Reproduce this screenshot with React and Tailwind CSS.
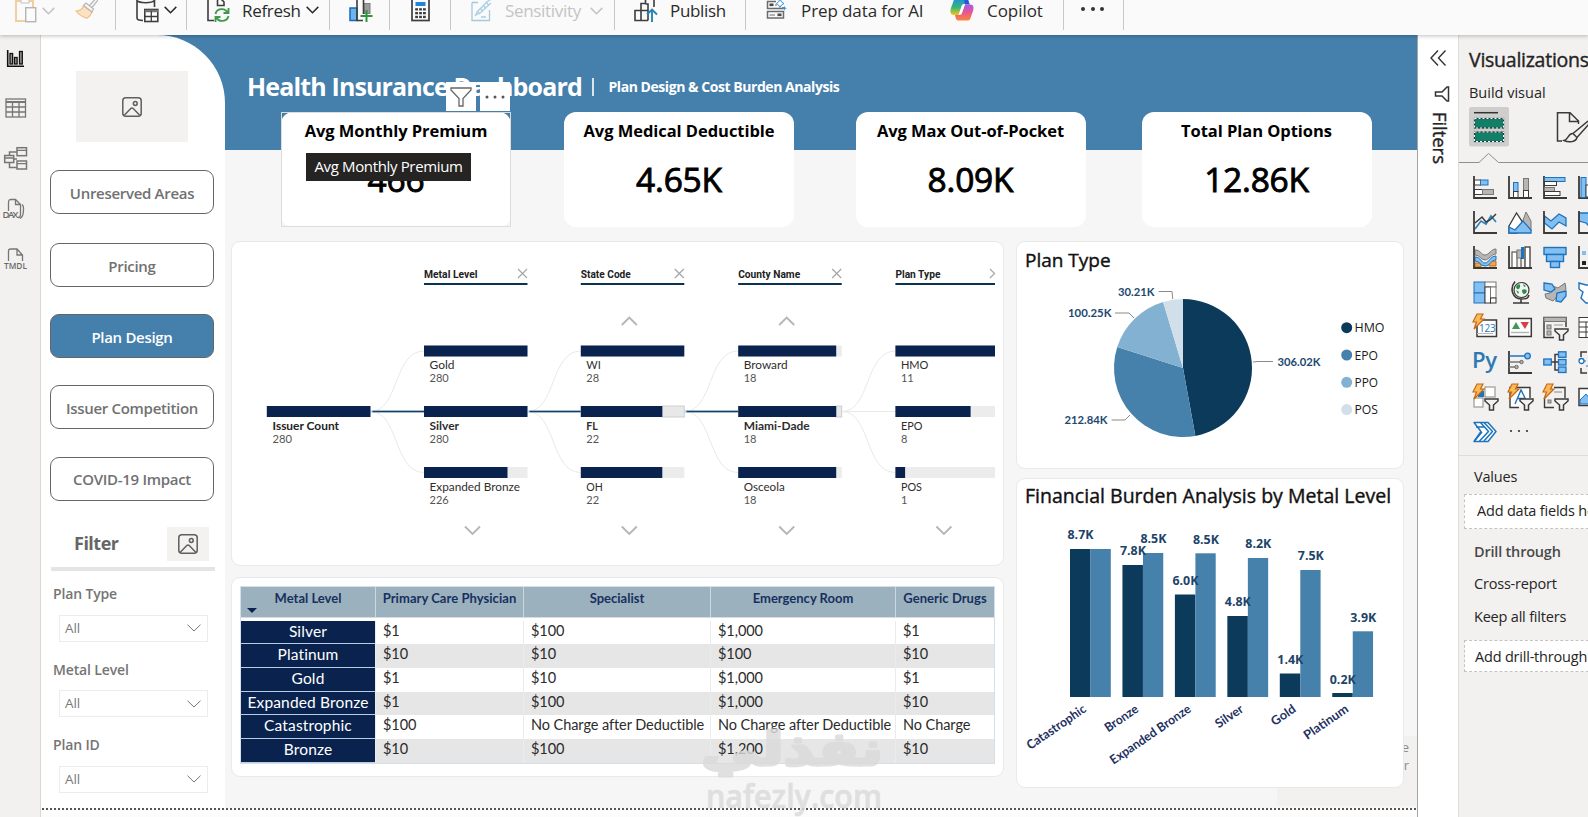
import React from 'react';

const NAVY = '#0a234e';
const DARK = '#3b3a39';
const BLUE = '#1e73bd';
const SKY = '#83bff0';
const GREY = '#b8b6b4';

const Chevron = ({ color = '#2b2b2b', className = '' }) => (
  <svg width="13" height="8" viewBox="0 0 13 8" fill="none" stroke={color} strokeWidth="1.5" className={className}>
    <path d="M0.7 0.9L6.5 6.7L12.3 0.9" />
  </svg>
);

const PasteIcon = () => (
  <svg width="22" height="23" viewBox="0 0 22 23" fill="none">
    <path d="M10 21H1V1H18V7" stroke="#f2cfa0" strokeWidth="2" />
    <rect x="6" y="-2" width="8" height="5" stroke="#c4c4c4" fill="#fafafa" />
    <rect x="10.700" y="7.700" width="10" height="14" stroke="#b5b5b5" strokeWidth="1.400" fill="#fbfbfb" />
  </svg>
);

const BrushIcon = () => (
  <svg width="23" height="19" viewBox="0 0 23 19" fill="none">
    <path d="M1 11C4 11 7 10 8.500 6L17 12C16 15 14 17 12 18.300C8 17 4 15 1 11Z" fill="#fbe3c2" stroke="#f0c08a" strokeWidth="1.200" />
    <path d="M8.500 5.500L17 12M11 3L18.500 9L17 12L8.500 5.500ZM14.500 5.500L20.500 -1M17 7.500L23 0" stroke="#b9b9b9" strokeWidth="1.300" />
  </svg>
);

const DataIcon = () => (
  <svg width="23" height="23" viewBox="0 0 23 23" fill="none" stroke="#3d3d3d" strokeWidth="1.600">
    <path d="M1 0V18C1 19.600 4 20.500 7 20.500M18.500 0V7M1 0.500C3 3.400 16 3.400 18.500 0.500" />
    <rect x="8.800" y="9.500" width="13" height="12" fill="#fff" />
    <path d="M8.800 11H22" strokeWidth="2.500" stroke="#777" />
    <path d="M8.800 16.500H22M15.300 11V21.500" strokeWidth="1.300" />
  </svg>
);

const RefreshIcon = () => (
  <svg width="23" height="23" viewBox="0 0 23 23" fill="none">
    <path d="M7 20.500H1V-1M10.500 -1V5.500H17V2L14 -1" stroke="#3d3d3d" strokeWidth="1.600" />
    <path d="M8.500 14C9.500 8 18 7.500 20.500 12.500M21.500 8V13H16.500M21.500 16C20 22 12 22.500 9.500 17.500M8.500 22V17H13.500" stroke="#3f9a4c" strokeWidth="1.900" />
  </svg>
);

const NewVisualIcon = () => (
  <svg width="24" height="23" viewBox="0 0 24 23" fill="none">
    <rect x="1" y="8" width="7" height="12.500" fill="#6eb4ef" stroke="#1769b5" strokeWidth="1.500" />
    <rect x="15" y="3.500" width="6" height="10" fill="#9c9c9c" stroke="#7d7d7d" />
    <path d="M8 -1V20.500H14M14.500 -1V14" stroke="#3d3d3d" strokeWidth="1.600" />
    <path d="M17.500 10V22M11.500 16H23.500" stroke="#2e9440" strokeWidth="2" />
  </svg>
);

const CalculatorIcon = () => (
  <svg width="19" height="22" viewBox="0 0 19 22" fill="none">
    <rect x="1" y="-2" width="17" height="22.500" stroke="#3d3d3d" strokeWidth="1.700" />
    <rect x="4.500" y="2" width="10" height="4" fill="#2182d8" />
    {[8.2, 12, 15.8].map(y => [4.2, 8.1, 12].map(x => (
      <rect key={x + '-' + y} x={x} y={y} width="2.800" height="2.300" fill="#3d3d3d" />
    )))}
  </svg>
);

const SensitivityIcon = () => (
  <svg width="23" height="22" viewBox="0 0 23 22" fill="none" stroke="#a9cfe6" strokeWidth="1.300">
    <path d="M1 2.500H7M1 2.500V20.500H18.500V10" stroke="#a8c8dc" />
    <path d="M4 15.500L7 11L17 1L22 -2M4 15.500L9 13L20 3" />
    <path d="M6 11L9 14M9 8L12 11.500M12 5L15 8.500M15 2L18 5.500M10 17H15" />
  </svg>
);

const PublishIcon = () => (
  <svg width="24" height="22" viewBox="0 0 24 22" fill="none">
    <path d="M14 20.500H1V10.500H7V3.500H11.500V-1M7 10.500H14V20.500M7 10.500V20.500M11.500 4H14V10M20 -1V7" stroke="#3d3d3d" strokeWidth="1.600" />
    <path d="M18 22V10M13 14.500L18 9.500L23 14.500" stroke="#2385b8" strokeWidth="1.900" />
  </svg>
);

const PrepIcon = () => (
  <svg width="21" height="20" viewBox="0 0 21 20" fill="none">
    <path d="M10 1.500H1.500V8.500H17V7M1.500 11.500H17.500V18H1.500Z" stroke="#6b6b6b" strokeWidth="1.500" />
    <rect x="3.500" y="3.500" width="4" height="2.600" fill="#4a4a4a" />
    <rect x="11.500" y="13.500" width="4" height="2.600" fill="#4a4a4a" />
    <path d="M3.500 15H9M9 5H11" stroke="#6b6b6b" />
    <path d="M14 -1L15.500 2L18 3.500L15.500 5L14 7.500L12.500 5L10.500 3.500L12.500 2Z" stroke="#3b94dc" fill="#fff" />
    <path d="M18.500 6L19.200 7.600L20.800 8.300L19.200 9L18.500 10.500L17.700 9L16.200 8.300L17.700 7.600Z" fill="#3b94dc" />
  </svg>
);

const CopilotIcon = () => (
  <svg width="24" height="22" viewBox="0 0 24 22">
    <defs>
      <linearGradient id="cpA" x1="0" y1="0" x2="0" y2="1">
        <stop offset="0" stopColor="#1b8ce8" />
        <stop offset="0.550" stopColor="#35b778" />
        <stop offset="1" stopColor="#f5c518" />
      </linearGradient>
      <linearGradient id="cpB" x1="0" y1="0" x2="0" y2="1">
        <stop offset="0" stopColor="#a35be8" />
        <stop offset="0.500" stopColor="#e8578f" />
        <stop offset="1" stopColor="#f9863b" />
      </linearGradient>
    </defs>
    <path d="M7 -2H16C18 -2 18.500 2 19.500 4L14 4C12 4 11.500 6 11 8L8.500 15H4C0 15 0 11 1 8L3.500 1C4 -1 5 -2 7 -2Z" fill="url(#cpA)" />
    <path d="M14 -2H16.500C18.500 -2 18.500 3 20 4.500L15 4.500Z" fill="#2a53d8" />
    <path d="M17 20.500H8C6 20.500 5.500 17 5 15H9C11 15 12 13 12.500 11L15 4.500H20C24 4.500 24 8 23 11L20.500 18C20 20 19 20.500 17 20.500Z" fill="url(#cpB)" />
    <path d="M14.500 5.500L11.500 14.300L9 14.300L12 5.500Z" fill="#fff" />
  </svg>
);

const Toolbar = () => (
  <div className="relative z-10 flex h-[35px] shrink-0 bg-[#fafafa] text-[17px] tracking-[-0.32px] text-[#2b2b2b] shadow-[0_1px_4px_rgba(0,0,0,0.25)] [&>div]:flex [&>div]:h-[30px] [&>div]:shrink-0 [&>div]:border-r [&>div]:border-[#c8c8c8] [&_span]:mt-[-1px] [&_span]:h-[24px] [&_span]:leading-[24px] [&_span]:whitespace-nowrap">
    <div className="w-[116px] pl-[15px]">
      <PasteIcon />
      <Chevron color="#c3c3c3" className="mt-[7px] ml-[5px]" />
      <div className="ml-[20px]"><BrushIcon /></div>
    </div>
    <div className="w-[71px] pl-[20px]">
      <DataIcon />
      <Chevron className="mt-[6px] ml-[5px]" />
    </div>
    <div className="w-[143px] pl-[20px]">
      <RefreshIcon />
      <span className="ml-[12px] w-[64px]">Refresh</span>
      <Chevron className="mt-[6px]" />
    </div>
    <div className="w-[60px] pl-[19px]"><NewVisualIcon /></div>
    <div className="w-[61px] pl-[21px]"><CalculatorIcon /></div>
    <div className="w-[164px] pl-[20px]">
      <SensitivityIcon />
      <span className="ml-[11px] w-[85px] text-[#c4c4c4]">Sensitivity</span>
      <Chevron color="#c4c4c4" className="mt-[7px]" />
    </div>
    <div className="w-[131px] pl-[19px]">
      <PublishIcon />
      <span className="ml-[12px]">Publish</span>
    </div>
    <div className="w-[318px] pl-[20px]">
      <PrepIcon />
      <span className="ml-[14px] w-[149px] tracking-[-0.1px]">Prep data for AI</span>
      <CopilotIcon />
      <span className="ml-[13px] tracking-[-0.05px]">Copilot</span>
    </div>
    <div className="w-[60px] gap-[5.500px] pt-[7px] pl-[17px]">
      <i className="size-[4px] rounded-full bg-[#333]" />
      <i className="size-[4px] rounded-full bg-[#333]" />
      <i className="size-[4px] rounded-full bg-[#333]" />
    </div>
  </div>
);

const Rail = () => (
  <div className="w-[41px] shrink-0 border-r border-[#d9d8d7] bg-[#f2f1f0]">
    <svg width="40" height="250" viewBox="0 35 40 250" fill="none" stroke="#777675" strokeWidth="1.300">
      <path d="M7.700 50V66.300H24" stroke="#111" strokeWidth="1.600" />
      <g stroke="#111" fill="#999">
        <rect x="10" y="53.500" width="2.600" height="10.500" />
        <rect x="14.500" y="57.500" width="2.600" height="6.500" />
        <rect x="19.500" y="51.500" width="2.800" height="12.500" />
      </g>
      <rect x="6" y="99" width="19.500" height="18" />
      <path d="M6 102H25.500" strokeWidth="2" />
      <path d="M6 107H25.500M6 112H25.500M12.500 102V117M19 102V117" />
      <g fill="#f2f1f0" strokeWidth="1.500">
        <path d="M9.500 156V152H17M9.500 162V167.500H17M14 159H17" />
        <rect x="4.700" y="155.500" width="9" height="7" />
        <rect x="17" y="147.700" width="9.500" height="8" />
        <rect x="17" y="161" width="9.500" height="8" />
      </g>
      <path d="M4.700 158H13.700M17 150.300H26.500M17 163.600H26.500" />
      <path d="M8.500 211V203C8.500 200 9 199.500 11 199.500H15.500L20.500 204.500V214C20.500 216 20 217.500 18 217.500M15.500 199.500V204.500H20.500M22 204.500C24 206 23.500 207 23.500 210C23.500 214 22.500 217 20 218.500" />
      <path d="M8.500 261V251C8.500 249.500 9 249 10.500 249H17L22.500 255V261M17 249V255H22.500" />
      <g fill="#6b6a69" stroke="none" fontFamily="Open Sans" fontWeight="600">
        <text x="2.500" y="218" fontSize="9.500" textLength="16">DAX</text>
        <text x="4" y="269" fontSize="9.500" textLength="23" lengthAdjust="spacingAndGlyphs">TMDL</text>
      </g>
    </svg>
  </div>
);

const ImageIcon = () => (
  <svg width="20" height="20" viewBox="0 0 20 20" fill="none" stroke="#5f5e5d" strokeWidth="1.500">
    <rect x="0.800" y="0.800" width="18.400" height="18.400" rx="3" />
    <circle cx="13.300" cy="6.500" r="1.900" />
    <path d="M2.500 18L9 11.300Q10 10.500 11 11.300L17.500 18" />
  </svg>
);

const pages = [
  { name: 'Unreserved Areas', cls: 'mt-[28px]' },
  { name: 'Pricing', cls: 'mt-[29px]' },
  { name: 'Plan Design', cls: 'mt-[27px]', active: true },
  { name: 'Issuer Competition', cls: 'mt-[27px]' },
  { name: 'COVID-19 Impact', cls: 'mt-[27.5px]' },
];

const Slicer = ({ label, className }) => (
  <div className={className}>
    <div className="pl-[12px] text-[14px] leading-[20px] font-semibold tracking-[-0.15px] text-[#757575]">{label}</div>
    <div className="mt-[10.5px] ml-[18px] flex h-[27px] w-[149px] items-center justify-between border border-[#ececec] pr-[6px] pl-[5px] text-[13.5px] tracking-[-0.1px] text-[#7a7a7a]">
      All
      <svg width="14" height="8" viewBox="0 0 14 8" fill="none" stroke="#777"><path d="M0.500 0.700L7 7L13.500 0.700" /></svg>
    </div>
  </div>
);

const Sidebar = () => (
  <div className="w-[184px] shrink-0 rounded-tr-[68px] bg-white pt-[36px]">
    <div className="ml-[35px] flex h-[71px] w-[112px] items-center justify-center bg-[#f3f2f1]">
      <ImageIcon />
    </div>
    {pages.map(p => (
      <div
        key={p.name}
        className={`ml-[9px] flex h-[44px] w-[164px] items-center justify-center rounded-[9px] border border-[#666] pt-[2px] text-[15px] font-semibold tracking-[-0.3px] whitespace-nowrap ${p.cls} ${p.active ? 'bg-[#4580ac] text-white' : 'text-[#717171]'}`}
      >
        {p.name}
      </div>
    ))}
    <div className="mt-[26px] flex h-[34px] items-center justify-between pr-[16px] pl-[33px]">
      <span className="text-[18px] font-bold tracking-[-0.5px] text-[#666]">Filter</span>
      <div className="flex h-[34px] w-[42px] items-center justify-center bg-[#f3f2f1]"><ImageIcon /></div>
    </div>
    <div className="mt-[6.5px] ml-[10px] h-[4px] w-[164px] bg-[#e4e4e4]" />
    <Slicer label="Plan Type" className="mt-[13px]" />
    <Slicer label="Metal Level" className="mt-[18px]" />
    <Slicer label="Plan ID" className="mt-[18px]" />
  </div>
);

const Kpi = ({ title, value, className = '', children }) => (
  <div className={`relative flex h-[115px] w-[230px] shrink-0 flex-col items-center rounded-[12px] bg-white whitespace-nowrap text-black ${className}`}>
    <div className="mt-[7px] text-[16.5px] leading-[24px] font-bold tracking-[-0.05px]">{title}</div>
    <div className="mt-[13px] text-[33.5px] leading-[46px] tracking-[-0.2px] [-webkit-text-stroke:0.9px_#000]">{value}</div>
    {children}
  </div>
);

const columns = [
  {
    x: 424.5, w: 103.5, title: 'Metal Level', tw: 53.5, up: false,
    nodes: [['Gold', 280, 103.5, 25], ['Silver', 280, 103.5, 29.5], ['Expanded Bronze', 226, 83.5, 90.500]],
  },
  {
    x: 581.3, w: 103.5, title: 'State Code', tw: 50, up: true,
    nodes: [['WI', 28, 103.5, 14.500], ['FL', 22, 81.5, 11.500], ['OH', 22, 81.5, 16.500]],
  },
  {
    x: 738.7, w: 103.5, title: 'County Name', tw: 62, up: true,
    nodes: [['Broward', 18, 98, 44], ['Miami-Dade', 18, 98, 66], ['Osceola', 18, 98, 41]],
  },
  {
    x: 895.9, w: 99.6, title: 'Plan Type', tw: 45, up: false,
    nodes: [['HMO', 11, 99.6, 27.500], ['EPO', 8, 75.2, 21.500], ['POS', 1, 9.7, 21]],
  },
];

const DecompositionTree = () => (
  <svg width="770" height="322" viewBox="232.500 242 770 322" className="block" fontFamily="Lato, Open Sans, sans-serif">
    <g fill="none" stroke="#e9e9e9">
      {[371, 528, 685, 842.5].map((x, i) => {
        const nx = columns[i].x;
        const m = (x + nx) / 2;
        return (
          <g key={x}>
            <path d={`M${x} 411.500C${m + 2} 411.500 ${m - 4} 351 ${nx} 351`} />
            <path d={`M${x} 411.500C${m + 2} 411.500 ${m - 4} 472.500 ${nx} 472.500`} />
            {i === 3 ? (
              <path d={`M${x} 411.500H${nx}`} />
            ) : (
              <>
                <path d={`M${x} 411.500H${nx}`} stroke="#c2dbec" strokeWidth="2.400" />
                <path d={`M${x + 2} 411.500H${nx}`} stroke="#173f63" strokeWidth="1.300" />
              </>
            )}
          </g>
        );
      })}
    </g>
    <rect x="267.300" y="406" width="103.700" height="11" fill={NAVY} />
    <text x="273" y="430" fontSize="12" fontWeight="700" fill="#252423" textLength="66.500" lengthAdjust="spacingAndGlyphs">Issuer Count</text>
    <text x="273" y="443" fontSize="12" fill="#555" textLength="19.500" lengthAdjust="spacingAndGlyphs">280</text>
    {columns.map((c, ci) => (
      <g key={c.title}>
        <text x={c.x} y="278" fontSize="11.500" fontWeight="700" fill="#222" textLength={c.tw} lengthAdjust="spacingAndGlyphs" fontFamily="Roboto">{c.title}</text>
        {ci === 3
          ? <path d="M990.500 269L995 273.500L990.500 278" fill="none" stroke="#aaa" strokeWidth="1.300" />
          : <path d={`M${c.x + 94} 269L${c.x + 103} 278M${c.x + 103} 269L${c.x + 94} 278`} stroke="#a6a6a6" strokeWidth="1.200" />}
        <rect x={c.x} y="283" width={c.w} height="2" fill="#0b3350" />
        {c.up && <path d={`M${c.x + 41} 325L${c.x + 48.5} 317.500L${c.x + 56} 325`} fill="none" stroke="#b5b5b5" strokeWidth="1.800" />}
        <path d={`M${c.x + 41} 526.500L${c.x + 48.5} 534L${c.x + 56} 526.500`} fill="none" stroke="#b5b5b5" strokeWidth="1.800" />
        {c.nodes.map(([name, value, w, tw], i) => {
          const y = [345.5, 406, 467][i];
          const ty = [369, 430, 491][i];
          return (
            <g key={name}>
              <rect x={c.x} y={y} width={c.w} height="11" fill="#ececec" />
              {i === 1 && w < c.w && ci < 3 && <rect x={c.x + w} y={y} width={c.w - w} height="11" fill="#e8e8e8" stroke="#cfcfcf" />}
              <rect x={c.x} y={y} width={w} height="11" fill={NAVY} />
              <text x={c.x + 5.5} y={ty} fontSize="12" fontWeight={i === 1 && ci < 3 ? 700 : 400} fill="#2f2e2d" textLength={tw} lengthAdjust="spacingAndGlyphs">{name}</text>
              <text x={c.x + 5.5} y={ty + 13} fontSize="12" fill="#555" textLength={String(value).length * 6.4} lengthAdjust="spacingAndGlyphs">{value}</text>
            </g>
          );
        })}
      </g>
    ))}
  </svg>
);

const rows = [
  ['Silver', '$1', '$100', '$1,000', '$1'],
  ['Platinum', '$10', '$10', '$100', '$10'],
  ['Gold', '$1', '$10', '$1,000', '$1'],
  ['Expanded Bronze', '$1', '$100', '$1,000', '$10'],
  ['Catastrophic', '$100', 'No Charge after Deductible', 'No Charge after Deductible', 'No Charge'],
  ['Bronze', '$10', '$100', '$1,200', '$10'],
];

const CostTable = () => (
  <div className="ml-[8px] w-[755px] border border-[#d5dfe8] font-[Lato,sans-serif] whitespace-nowrap">
    <div className="relative grid h-[31px] grid-cols-[134px_148px_187px_185px_99px] border-b border-[#d5dde3] bg-[#9cb1be] text-center text-[13px] leading-[23px] font-bold text-[#17305f] [&>div+div]:border-l [&>div+div]:border-[#ccd8e0]">
      <div>Metal Level</div>
      <div className="tracking-[0.05px]">Primary Care Physician</div>
      <div>Specialist</div>
      <div>Emergency Room</div>
      <div className="tracking-[0.05px]">Generic Drugs</div>
      <svg width="10" height="5" viewBox="0 0 10 5" className="absolute top-[21px] left-[6px]"><path d="M0 0H10L5 5Z" fill={NAVY} /></svg>
    </div>
    <div className="mt-[2.500px]">
      {rows.map((r, i) => (
        <div key={r[0]} className={`grid h-[23.7px] grid-cols-[134px_148px_187px_185px_99px] text-[14.5px] leading-[20px] tracking-[-0.07px] text-[#2b2b2b] [&>div+div]:border-l [&>div+div]:border-[#ebebeb] [&>div+div]:pl-[7px] ${i % 2 ? 'bg-[#e6e6e6]' : 'bg-white'}`}>
          <div className="border-b border-[#b9cde4] bg-[#0a234e] text-center text-[15.5px] leading-[21px] tracking-[0.15px] text-white">{r[0]}</div>
          <div>{r[1]}</div>
          <div>{r[2]}</div>
          <div>{r[3]}</div>
          <div>{r[4]}</div>
        </div>
      ))}
    </div>
  </div>
);

const slices = [
  { name: 'HMO', value: 306.02, color: '#0b3a5b' },
  { name: 'EPO', value: 212.84, color: '#4681ab' },
  { name: 'PPO', value: 100.25, color: '#83b1d2' },
  { name: 'POS', value: 30.21, color: '#d0dfea' },
];

const PieChart = () => {
  const total = slices.reduce((s, d) => s + d.value, 0);
  let acc = 0;
  const pt = v => {
    const a = (v / total) * Math.PI * 2;
    return `${1183 + 69 * Math.sin(a)} ${368 - 69 * Math.cos(a)}`;
  };
  return (
    <svg width="386" height="190" viewBox="1017 275 386 190" className="block" fontFamily="Open Sans, sans-serif">
      {slices.map(d => {
        const from = pt(acc);
        acc += d.value;
        return <path key={d.name} d={`M1183 368L${from}A69 69 0 0 1 ${pt(acc)}Z`} fill={d.color} />;
      })}
      <path d="M1253 362L1258 361.500H1273M1158.500 291.500H1172L1172.800 299M1115 313H1129L1134 318M1111.500 420H1125L1130 415" fill="none" stroke="#8a8a8a" />
      <g fontSize="12" fontWeight="700" fill="#1d4870" fontFamily="Lato">
        <text x="1277.500" y="366" textLength="43" lengthAdjust="spacingAndGlyphs">306.02K</text>
        <text x="1118" y="296" textLength="36.500" lengthAdjust="spacingAndGlyphs">30.21K</text>
        <text x="1068" y="317.200" textLength="43.500" lengthAdjust="spacingAndGlyphs">100.25K</text>
        <text x="1064.500" y="424" textLength="43" lengthAdjust="spacingAndGlyphs">212.84K</text>
      </g>
      {slices.map((d, i) => (
        <g key={d.name}>
          <circle cx="1346.700" cy={327.7 + i * 27.3} r="5.500" fill={d.color} />
          <text x="1354.500" y={332.2 + i * 27.3} fontSize="12.500" fill="#1a1a1a" textLength={i === 0 ? 30 : 23.5} lengthAdjust="spacingAndGlyphs">{d.name}</text>
        </g>
      ))}
    </svg>
  );
};

// [label, dark bar top, light bar top, dark label, light label, dark label y, light label y, axis text length]
const bars = [
  ['Catastrophic', 549, 549, '8.7K', '', 539, 0, 69],
  ['Bronze', 565, 553, '7.8K', '8.5K', 555.3, 543.3, 38],
  ['Expanded Bronze', 594.5, 553.3, '6.0K', '8.5K', 585.3, 544.3, 95],
  ['Silver', 616, 558, '4.8K', '8.2K', 606.3, 548.3, 31],
  ['Gold', 673.5, 570, '1.4K', '7.5K', 664.3, 560.3, 27],
  ['Platinum', 693, 631.3, '0.2K', '3.9K', 683.5, 621.5, 51],
];

const BarChart = () => (
  <svg width="386" height="265" viewBox="1017 515 386 265" className="block" fontFamily="Lato, sans-serif">
    {bars.map(([name, t1, t2], i) => {
      const x = 1070 + i * 52.45;
      return (
        <g key={name}>
          <rect x={x} y={t1} width="20.500" height={697 - t1} fill="#0b3a5b" />
          <rect x={x + 20.5} y={t2} width="20.300" height={697 - t2} fill="#4681ab" />
        </g>
      );
    })}
    {bars.map(([name, , , l1, l2, y1, y2, len], i) => {
      const x = 1070 + i * 52.45;
      return (
        <g key={name} fontWeight="700" fill="#1c4468">
          <text x={x - 2.5} y={y1} fontSize="12.500" fontFamily="Open Sans" textLength="26" lengthAdjust="spacingAndGlyphs">{l1}</text>
          {l2 && <text x={x + 18} y={y2} fontSize="12.500" fontFamily="Open Sans" textLength="26" lengthAdjust="spacingAndGlyphs">{l2}</text>}
          <text fontSize="12.500" fill="#23305f" textAnchor="end" textLength={len} lengthAdjust="spacingAndGlyphs" transform={`translate(${x + 17} 711) rotate(-34.500)`}>{name}</text>
        </g>
      );
    })}
  </svg>
);

const Card = ({ className, children }) => (
  <div className={`rounded-[9px] border border-[#e9e9e9] bg-white ${className}`}>{children}</div>
);

const Report = () => (
  <div className="relative flex h-[782px] w-[1376px] shrink-0 flex-col bg-[#fcfcfc]">
    <div className="flex h-[773px] bg-[linear-gradient(#4580ac_0_115px,#f6f6f6_115px)]">
      <Sidebar />
      <div className="relative w-[1192px]">
        <div className="flex h-[77px] items-center pt-[26px] pl-[22px] whitespace-nowrap text-white">
          <div className="w-[342px] text-[25px] font-bold tracking-[-0.85px]">Health Insurance Dashboard</div>
          <div className="ml-[3px] h-[18px] w-[1.5px] bg-white/80" />
          <div className="mt-[-1px] ml-[15px] text-[14px] font-bold tracking-[-0.45px]">Plan Design & Cost Burden Analysis</div>
        </div>
        <div className="flex pl-[56px]">
          <Kpi title="Avg Monthly Premium" value="466">
            <div className="absolute inset-0 border border-[#dcdcdc]" />
            <div className="absolute top-[41px] left-[25px] flex h-[28px] w-[165px] items-center justify-center bg-[#252423] pb-[1px] text-[15px] tracking-[-0.35px] text-white">Avg Monthly Premium</div>
            <div className="absolute top-[-30px] left-[165px] flex gap-[4px] [&>div]:flex [&>div]:h-[29px] [&>div]:w-[30px] [&>div]:items-center [&>div]:justify-center [&>div]:bg-white">
              <div>
                <svg width="22" height="20" viewBox="0 0 22 20" fill="none" stroke="#666" strokeWidth="1.300"><path d="M1 1H21V3L13 11.500V19H9V11.500L1 3Z" /></svg>
              </div>
              <div>
                <svg width="20" height="4" viewBox="0 0 20 4" fill="#555"><circle cx="2" cy="2" r="1.500" /><circle cx="10" cy="2" r="1.500" /><circle cx="18" cy="2" r="1.500" /></svg>
              </div>
            </div>
          </Kpi>
          <Kpi title="Avg Medical Deductible" value="4.65K" className="ml-[53px]" />
          <Kpi title="Avg Max Out-of-Pocket" value="8.09K" className="ml-[61.5px]" />
          <Kpi title="Total Plan Options" value="12.86K" className="ml-[56px]" />
        </div>
        <div className="mt-[14px] flex gap-[12px] pl-[6px]">
          <div className="flex w-[773px] flex-col gap-[11px]">
            <Card className="h-[325px]"><DecompositionTree /></Card>
            <Card className="h-[200px] pt-[8px]"><CostTable /></Card>
          </div>
          <div className="z-10 flex w-[388px] flex-col gap-[9px]">
            <Card className="h-[228px]">
              <div className="h-[33px] pt-[3px] pl-[8px] text-[19px] leading-[30px] text-[#111] [-webkit-text-stroke:0.4px_#111]">Plan Type</div>
              <PieChart />
            </Card>
            <Card className="h-[310px]">
              <div className="h-[36px] pt-[2px] pl-[8px] text-[19.5px] leading-[30px] tracking-[0.02px] whitespace-nowrap text-[#111] [-webkit-text-stroke:0.4px_#111]">Financial Burden Analysis by Metal Level</div>
              <BarChart />
            </Card>
          </div>
        </div>
        <div className="absolute right-0 bottom-[2px] h-[70px] w-[140px] bg-[#f2f1f0] pt-[2px] pr-[8px] text-right text-[13px] leading-[18px] text-[#8a8a8a]">
          Activate<br />for
        </div>
      </div>
    </div>
    <div className="ml-[1px] h-[2px] bg-[repeating-linear-gradient(90deg,#555_0_2px,transparent_2px_4px)]" />
    <svg width="200" height="106" viewBox="692 711 200 106" className="absolute top-[676px] left-[651px]" fill="#dadada" stroke="#dadada" opacity="0.820" strokeLinejoin="round" fontFamily="DejaVu Sans" fontWeight="700">
      <text x="701" y="765" fontSize="46" textLength="182" strokeWidth="3" lengthAdjust="spacingAndGlyphs">نفذلي</text>
      <text x="706" y="808" fontSize="32" textLength="176" strokeWidth="0.600" fontWeight="600" lengthAdjust="spacingAndGlyphs" fontFamily="Open Sans">nafezly.com</text>
    </svg>
  </div>
);

const FiltersPane = () => (
  <div className="flex w-[42px] shrink-0 flex-col items-center border-r border-l border-r-[#dddcdb] border-l-[#a5a5a5] bg-white pt-[15px]">
    <svg width="17" height="16" viewBox="0 0 17 16" fill="none" stroke="#333" strokeWidth="1.400"><path d="M8 0.500L1 8L8 15.500M15.500 0.500L8.500 8L15.500 15.500" /></svg>
    <svg width="16" height="16" viewBox="0 0 16 16" fill="none" stroke="#333" strokeWidth="1.500" className="mt-[20px] ml-[7px]"><path d="M14.500 1V15H13L8 10H1.500V6H8L13 1Z" /></svg>
    <div className="mt-[10px] ml-[4px] text-[18.5px] leading-[22px] tracking-[-0.05px] text-[#252423] [-webkit-text-stroke:0.4px_#252423] [writing-mode:vertical-rl]">Filters</div>
  </div>
);

const Axes = () => <path d="M1 0V22H24" fill="none" stroke={DARK} strokeWidth="1.800" />;
const Bolt = () => <path d="M5 0H11L8.500 5H12L2 15L4.500 8H1Z" fill="#fbb95a" stroke="#c56a12" strokeWidth="1.200" />;
const Funnel = () => <path d="M12 13H25V15L20.500 19V24H16.500V19L12 15Z" fill="#f2f1f0" stroke={DARK} strokeWidth="1.500" />;

const vizIcons = [
  <g key="0"><Axes /><rect x="1.500" y="4" width="6" height="5" fill="#fff" stroke={DARK} /><rect x="7.500" y="4" width="7.500" height="5" fill={SKY} stroke={BLUE} /><rect x="1.500" y="13.500" width="8" height="5" fill="#fff" stroke={DARK} /><rect x="9.500" y="13.500" width="11" height="5" fill={GREY} stroke="#777" /></g>,
  <g key="1"><Axes /><rect x="5.500" y="6.500" width="4.500" height="9" fill={SKY} stroke={BLUE} /><rect x="5.500" y="15.500" width="4.500" height="6" fill="#fff" stroke={DARK} /><rect x="15.500" y="2.500" width="5" height="12" fill={GREY} stroke="#777" /><rect x="15.500" y="14.500" width="5" height="7" fill="#fff" stroke={DARK} /></g>,
  <g key="2"><Axes /><rect x="1.500" y="1.500" width="20.500" height="4" fill={SKY} stroke={BLUE} /><rect x="1.500" y="5.500" width="12" height="4" fill="#fff" stroke={DARK} /><rect x="1.500" y="11.500" width="10" height="4" fill={GREY} stroke="#777" /><rect x="1.500" y="15.500" width="15.500" height="4" fill="#fff" stroke={DARK} /></g>,
  <g key="3"><Axes /><rect x="3" y="1.500" width="5" height="20" fill={SKY} stroke={BLUE} /><rect x="8" y="9" width="5" height="12" fill="#fff" stroke={DARK} /></g>,
  <g key="4" fill="none"><path d="M2 18L8 10L13 13L18 5L23 11" stroke="#2c83b8" strokeWidth="1.700" /><path d="M2 12L9 6L13 11L17 9L23 3" stroke={DARK} strokeWidth="1.500" /><Axes /></g>,
  <g key="5"><path d="M18 1L23 10V20L14 12Z" fill={GREY} stroke="#777" /><path d="M1 15L8.500 2L17 15L9 22H1Z" fill="#fff" stroke={DARK} strokeWidth="1.300" /><path d="M1 16L7 19L15 10L23 19V22H1Z" fill={SKY} stroke={BLUE} strokeWidth="1.300" /></g>,
  <g key="6"><path d="M1.500 5L8 10L16 3L23 7V15L16 11L9 18L1.500 12Z" fill={SKY} stroke={BLUE} strokeWidth="1.300" /><Axes /></g>,
  <g key="7"><path d="M1 2H24V12L15 19L8 12L1 10Z" fill={SKY} stroke={BLUE} strokeWidth="1.300" /><Axes /></g>,
  <g key="8"><path d="M2 4C8 4 8 9 12 9S18 3 23 3V8C18 8 16 14 12 14S7 9 2 9Z" fill={GREY} stroke="#777" /><path d="M2 17H8V21H2ZM16 15H23V20H16Z" fill="#f6a24a" stroke="#c56a12" /><path d="M2 11C8 11 8 17 12 17S17 10 23 10V14C18 14 17 20 12 20S7 15 2 15Z" fill={SKY} stroke={BLUE} /><Axes /></g>,
  <g key="9"><rect x="4" y="6" width="5" height="16" fill="#fff" stroke={DARK} /><rect x="9" y="4" width="5" height="8" fill={GREY} stroke="#777" /><rect x="13" y="1" width="3" height="12" fill={BLUE} /><rect x="17" y="1" width="5" height="21" fill="#fff" stroke={DARK} strokeWidth="1.300" /><path d="M13 12V22" stroke={DARK} /><Axes /></g>,
  <g key="10" fill={SKY} stroke={BLUE} strokeWidth="1.400"><rect x="1" y="1.500" width="22" height="7" /><rect x="3.500" y="8.500" width="17" height="7" /><rect x="7.500" y="15.500" width="9" height="6" /></g>,
  <g key="11"><Axes /><rect x="4" y="5" width="4" height="4" fill={SKY} /><rect x="4" y="15" width="4" height="4" fill="#222" /></g>,
  <g key="12"><rect x="1" y="1" width="11" height="11" fill={SKY} stroke={BLUE} /><rect x="1" y="12" width="11" height="10" fill={SKY} stroke={BLUE} /><rect x="12" y="1" width="11" height="5" fill="#fff" stroke="#777" /><rect x="12" y="6" width="5.500" height="16" fill="#fff" stroke={DARK} /><rect x="17.500" y="6" width="5.500" height="11" fill="#fff" stroke="#777" /><rect x="17.500" y="17" width="5.500" height="5" fill="#fff" stroke={DARK} /></g>,
  <g key="13"><circle cx="13.500" cy="9" r="7.500" fill="#eef6ef" stroke={DARK} strokeWidth="1.200" /><path d="M8 6C10 2 13 3 12 6S9 9 8 6ZM14 9C18 7 20 10 18 12S14 13 14 9ZM15 3L18 5L16 6ZM8 9L11 11L10 13Z" fill="#2f8a4c" /><path d="M7 0.500C1 8 5 18 13 18S20 16 21 14M13 18V22M5 22H21" fill="none" stroke={DARK} strokeWidth="1.600" /></g>,
  <g key="14"><path d="M7 4L15 7L22 2L23 8L21 11L15 12L13 17L10 20L3 17L2 13L7 12Z" fill={GREY} stroke="#777" /><path d="M1 2L9 3L12 8L8 11L1 9ZM23 10V15L18 21L13 20L14 12Z" fill={SKY} stroke={BLUE} strokeWidth="1.300" /></g>,
  <g key="15" fill="#fff"><path d="M1 2L8 4H24V22H8L3 17L5 11L1 8Z" stroke={BLUE} strokeWidth="1.400" /></g>,
  <g key="16"><rect x="4" y="4" width="19.500" height="16.500" fill="#fff" stroke={DARK} strokeWidth="1.500" /><text x="6" y="15.500" fontSize="11" fill={BLUE} fontFamily="Open Sans" textLength="16.500" lengthAdjust="spacingAndGlyphs">123</text><path d="M4 17.500H20" stroke={GREY} /><g transform="translate(-1 -2)"><Bolt /></g></g>,
  <g key="17"><rect x="0.800" y="2.500" width="22.500" height="18" fill="#fff" stroke={DARK} strokeWidth="1.500" /><path d="M4 13L8 6L12 13Z" fill="#3c9a54" /><path d="M12.500 6H21L17 13Z" fill="#d63f48" /><path d="M3 16.500H21" stroke={GREY} strokeWidth="1.500" /></g>,
  <g key="18"><path d="M11 21.500H1V1.500H23V11" fill="none" stroke={DARK} strokeWidth="1.500" /><rect x="1" y="1.500" width="22" height="4" fill={GREY} stroke="#777" /><rect x="4" y="9" width="4" height="4" fill={GREY} stroke="#777" /><rect x="4" y="15" width="4" height="4" fill={GREY} stroke="#777" /><path d="M11 9H20" stroke="#999" /><Funnel /></g>,
  <g key="19" fill="#fff" stroke={DARK}><rect x="1" y="1.500" width="23" height="20" /><path d="M1 6H24M1 11H24M1 16H24M8 6V22" /></g>,
  <g key="20"><text x="-1" y="17" fontSize="22" fontWeight="600" fill="#2b79b5" fontFamily="Open Sans" textLength="25" lengthAdjust="spacingAndGlyphs">Py</text></g>,
  <g key="21"><Axes /><path d="M1 5H17" stroke={BLUE} strokeWidth="1.500" /><circle cx="19.500" cy="5" r="2.800" fill={SKY} stroke={BLUE} strokeWidth="1.300" /><path d="M1 11H12M1 16H7" stroke="#777" strokeWidth="1.300" /><circle cx="13.500" cy="11" r="1.700" fill={GREY} stroke="#666" /><circle cx="8.500" cy="16" r="1.700" fill={GREY} stroke="#666" /></g>,
  <g key="22"><path d="M8 11H16M12 11V3.500H16M12 11V19H16" fill="none" stroke={DARK} strokeWidth="1.500" /><g fill={SKY} stroke={BLUE} strokeWidth="1.300"><rect x="0.800" y="8" width="7.500" height="6" /><rect x="15.500" y="0.800" width="7.500" height="5.500" /><rect x="15.500" y="8.500" width="7.500" height="5.500" /><rect x="15.500" y="16" width="7.500" height="5.500" /></g></g>,
  <g key="23" fill="none"><path d="M3 6V1H9M15 1H20M3 17V22H9" stroke={DARK} strokeWidth="1.500" /><path d="M6 10H8M8 15H14" stroke={BLUE} /><circle cx="3.500" cy="10" r="2.500" stroke={BLUE} fill="#fff" strokeWidth="1.300" /></g>,
  <g key="24"><g fill="#fff" stroke="#999" strokeWidth="1.200"><rect x="12" y="1" width="10" height="10" /><rect x="1" y="12" width="9" height="9" /></g><rect x="5" y="5" width="6" height="6" fill={BLUE} /><Funnel /><g transform="translate(-1 -2)"><Bolt /></g></g>,
  <g key="25"><path d="M11 21.500H2V1.500H22V12" fill="#fff" stroke={DARK} strokeWidth="1.400" /><path d="M7 18L13 4L18 14M9.500 12.500H16" fill="none" stroke={BLUE} strokeWidth="1.400" /><Funnel /><g transform="translate(-1 -2)"><Bolt /></g></g>,
  <g key="26"><path d="M11 21.500H1.500V12M11 1.500H22V12" fill="none" stroke={DARK} strokeWidth="1.400" /><rect x="5" y="14" width="3" height="3" fill={GREY} stroke="#777" /><path d="M11 6H19" stroke="#888" /><Funnel /><g transform="translate(-1 -2)"><Bolt /></g></g>,
  <g key="27"><rect x="1" y="2.500" width="23" height="17" fill="#fff" stroke={DARK} strokeWidth="1.500" /><path d="M2 14L8 8L16 18H2Z" fill={SKY} stroke={BLUE} /></g>,
  <g key="28" fill="#fff" stroke={BLUE} strokeWidth="1.500" strokeLinejoin="round"><path d="M1 1.500H15L23 10.500L15 20.500H1L8 10.500Z" /><path d="M6.500 20L15.500 10.500L7.500 1.500M3 6H12M1.500 20L9 11M11 20L19.500 10.500L11 1.500" fill="none" /></g>,
  <g key="29" fill="#333"><circle cx="3" cy="10" r="1.100" /><circle cx="11" cy="10" r="1.100" /><circle cx="19" cy="10" r="1.100" /></g>,
];

const VisualizationsPane = () => (
  <div className="w-[129px] shrink-0 overflow-hidden bg-[#f2f1f0] text-[14.5px] tracking-[-0.2px] whitespace-nowrap text-[#252423]">
    <div className="h-[41px] pt-[10px] pl-[10px] text-[19.5px] leading-[30px] tracking-[-0.25px] [-webkit-text-stroke:0.4px_#252423]">Visualizations</div>
    <div className="h-[31px] pt-[7px] pl-[10px] leading-[20px] tracking-[0px]">Build visual</div>
    <svg width="129" height="60" viewBox="1459 107 129 60" fill="none" className="block">
      <rect x="1469" y="107" width="40" height="39.500" rx="2" fill="#cfcecd" />
      <path d="M1474 112.700H1498" stroke="#333" strokeWidth="1.500" />
      <g fill="#128068" stroke="#1c3d36" strokeWidth="1.200">
        <rect x="1474.500" y="118.500" width="29" height="9.500" />
        <rect x="1474.500" y="132" width="29" height="9.500" />
      </g>
      <g stroke="#fff" strokeDasharray="2 2">
        <rect x="1474.500" y="118.500" width="29" height="9.500" />
        <rect x="1474.500" y="132" width="29" height="9.500" />
      </g>
      <g stroke={DARK} strokeWidth="1.500">
        <path d="M1562 141H1557.500V112.700H1570L1578.500 121V124M1569.500 113V121.500H1578" />
        <path d="M1588 121L1573 133.500L1577 137.500L1590 123M1573 133.500C1568 133 1569 139 1564 140.500C1569 143 1576 142 1577 137.500" fill="#f2f1f0" />
      </g>
      <path d="M1459 162.500H1479L1488.500 153.500L1498.500 162.500H1588" stroke="#8f8e8d" />
    </svg>
    <div className="grid w-[160px] auto-rows-[35px] grid-cols-[repeat(4,35px)] pt-[9px] pl-[14px]">
      {vizIcons.map((icon, i) => (
        <svg key={i} width="26" height="25" viewBox="0 0 26 25" className="overflow-visible">{icon}</svg>
      ))}
    </div>
    <div className="mt-[-1px] border-t border-[#dddcdb] pt-[11px]">
      <div className="pl-[15px] leading-[20px]">Values</div>
      <div className="mt-[7px] ml-[5px] h-[35px] w-[150px] border border-dashed border-[#c4c3c2] bg-white pl-[12px] leading-[32px]">Add data fields here</div>
      <div className="mt-[13px] pl-[15px] leading-[20px] font-semibold text-[#4a4948]">Drill through</div>
      <div className="mt-[12px] pl-[15px] leading-[20px]">Cross-report</div>
      <div className="mt-[13px] pl-[15px] leading-[20px]">Keep all filters</div>
      <div className="mt-[13px] ml-[5px] h-[32px] w-[150px] border border-dashed border-[#c4c3c2] bg-white pl-[10px] leading-[32px]">Add drill-through fields here</div>
    </div>
  </div>
);

const App = () => (
  <div className="flex h-[817px] w-[1588px] flex-col overflow-hidden bg-white font-['Open_Sans',sans-serif]">
    <Toolbar />
    <div className="flex h-[782px]">
      <Rail />
      <Report />
      <FiltersPane />
      <VisualizationsPane />
    </div>
  </div>
);

export default App;
